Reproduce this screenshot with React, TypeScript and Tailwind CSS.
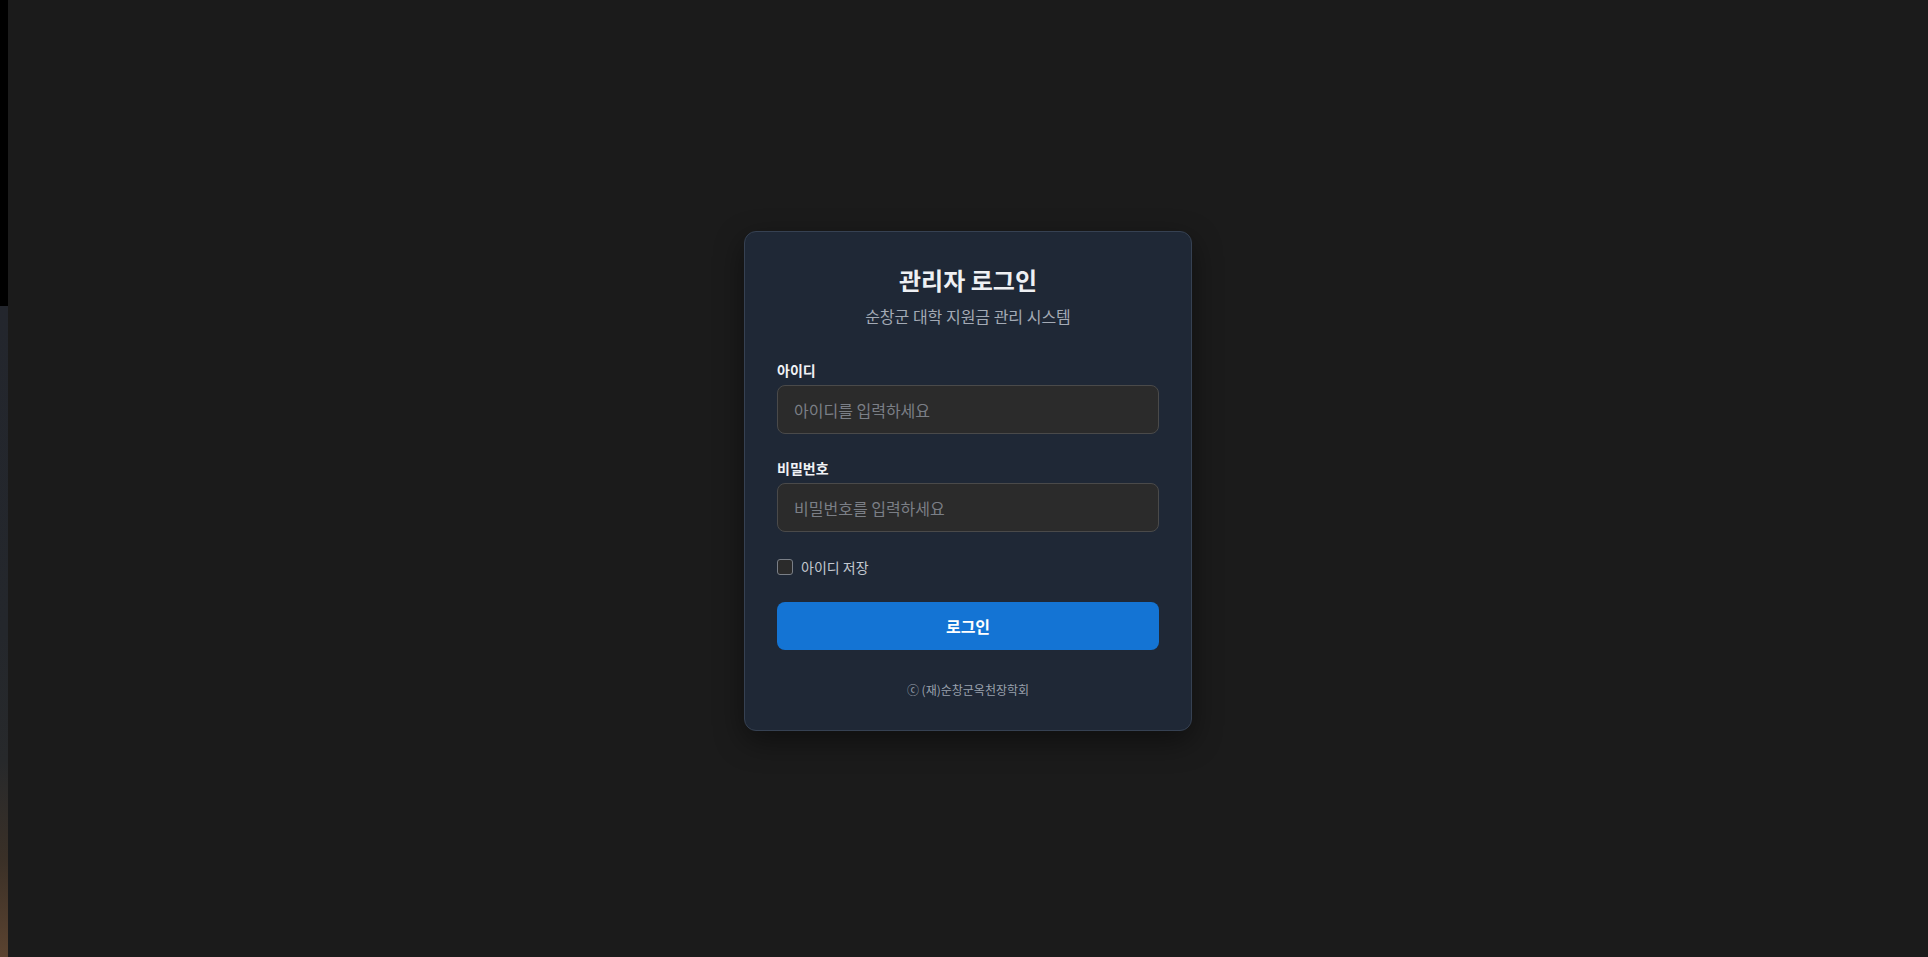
import React from "react";

export default function App() {
  const font = { fontFamily: '"Noto Sans CJK KR", "Noto Sans", sans-serif' };
  return (
    <div className="flex h-[957px] w-full bg-[#1b1b1b]" style={font}>
      <div className="flex w-[8px] shrink-0 flex-col">
        <div className="h-[306px] bg-black" />
        <div className="flex-1 bg-[linear-gradient(to_bottom,#23262d_0%,#24272c_50%,#27292b_70%,#3a3027_85%,#5b4330_100%)]" />
      </div>
      <div className="flex flex-1 items-center justify-center pt-[5px]">
        <div className="w-[448px] rounded-xl border border-[#364152] bg-[#1f2836] p-8 shadow-[0_10px_30px_rgba(0,0,0,0.45)]">
          <div className="mb-8 text-center">
            <h1 className="text-2xl font-bold leading-8 text-[#eef0f3]">관리자 로그인</h1>
            <p className="mt-2 text-base leading-6 text-[#a3aab5]">순창군 대학 지원금 관리 시스템</p>
          </div>
          <div className="mb-6">
            <label className="mb-[5px] block text-sm font-semibold leading-5 text-[#f0f2f5]">아이디</label>
            <input
              type="text"
              placeholder="아이디를 입력하세요"
              className="block h-[49px] w-full rounded-lg border border-[#4a4a4a] bg-[#2b2b2b] px-4 text-base text-white placeholder:text-[#7b7f86] outline-none"
              style={font}
            />
          </div>
          <div className="mb-6">
            <label className="mb-[5px] block text-sm font-semibold leading-5 text-[#f0f2f5]">비밀번호</label>
            <input
              type="password"
              placeholder="비밀번호를 입력하세요"
              className="block h-[49px] w-full rounded-lg border border-[#4a4a4a] bg-[#2b2b2b] px-4 text-base text-white placeholder:text-[#7b7f86] outline-none"
              style={font}
            />
          </div>
          <div className="mb-6 flex h-[22px] items-center gap-2">
            <span className="block h-4 w-4 rounded-[3px] border border-[#7a7f87] bg-[#2b2b2b]" />
            <span className="text-sm leading-5 text-[#c3c8d0]">아이디 저장</span>
          </div>
          <button
            className="flex h-12 w-full items-center justify-center rounded-lg bg-[#1474d4] text-base font-bold text-white"
            style={font}
          >
            로그인
          </button>
          <p className="mt-8 text-center text-xs leading-4 text-[#9aa1ad]">ⓒ (재)순창군옥천장학회</p>
        </div>
      </div>
    </div>
  );
}
